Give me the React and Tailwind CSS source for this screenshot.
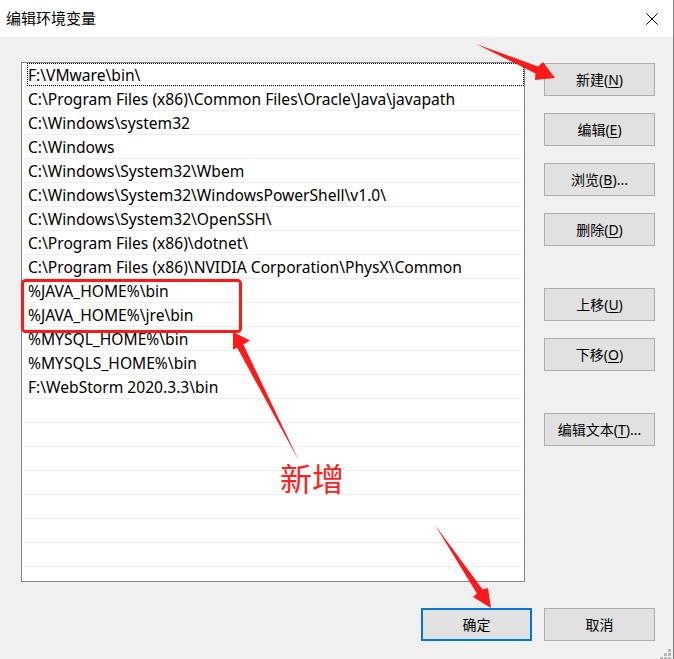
import React from "react";

const paths = [
  "F:\\VMware\\bin\\",
  "C:\\Program Files (x86)\\Common Files\\Oracle\\Java\\javapath",
  "C:\\Windows\\system32",
  "C:\\Windows",
  "C:\\Windows\\System32\\Wbem",
  "C:\\Windows\\System32\\WindowsPowerShell\\v1.0\\",
  "C:\\Windows\\System32\\OpenSSH\\",
  "C:\\Program Files (x86)\\dotnet\\",
  "C:\\Program Files (x86)\\NVIDIA Corporation\\PhysX\\Common",
  "%JAVA_HOME%\\bin",
  "%JAVA_HOME%\\jre\\bin",
  "%MYSQL_HOME%\\bin",
  "%MYSQLS_HOME%\\bin",
  "F:\\WebStorm 2020.3.3\\bin",
];

const font = { fontFamily: '"Noto Sans", "Noto Sans CJK SC", sans-serif' };

function Btn({ label, keyChar, dots, primary, className = "" }) {
  return (
    <button
      className={`h-[33px] w-[111px] flex items-center justify-center text-[14px] text-black bg-[#e1e1e1] ${
        primary ? "border-2 border-[#0078d7]" : "border border-[#adadad]"
      } ${className}`}
    >
      {label}
      {keyChar && (
        <>
          (<span className="underline underline-offset-2">{keyChar}</span>)
        </>
      )}
      {dots && "..."}
    </button>
  );
}

export default function App() {
  const rows = [...paths, ...Array(8).fill("")];
  return (
    <div
      style={font}
      className="relative w-[674px] h-[659px] bg-[#f0f0f0] border-r border-[#7f7f7f] flex flex-col overflow-hidden"
    >
      <div className="h-[37px] bg-white flex items-center justify-between pl-[6px] pr-[15px]">
        <span className="text-[15px] text-black">编辑环境变量</span>
        <svg width="12" height="12" viewBox="0 0 12 12">
          <path d="M0.5 0.5L11.5 11.5M11.5 0.5L0.5 11.5" stroke="#000" strokeWidth="1" />
        </svg>
      </div>

      <div className="flex pt-[25px] pl-[21px] gap-[19px]">
        <div className="w-[504px] h-[520px] bg-white border border-[#828790] overflow-hidden">
          {rows.map((p, i) => (
            <div
              key={i}
              className="relative h-[24px] border-b border-[#efefef] pl-[6px] pt-[2px] flex items-center text-[15.6px] text-black whitespace-nowrap"
            >
              {i === 0 && (
                <div className="absolute top-0 bottom-0 left-[5px] right-0 border border-dotted border-black" />
              )}
              {p}
            </div>
          ))}
        </div>

        <div className="flex flex-col w-[111px] pt-[1px]">
          <Btn label="新建" keyChar="N" />
          <Btn label="编辑" keyChar="E" className="mt-[17px]" />
          <Btn label="浏览" keyChar="B" dots className="mt-[17px]" />
          <Btn label="删除" keyChar="D" className="mt-[17px]" />
          <Btn label="上移" keyChar="U" className="mt-[42px]" />
          <Btn label="下移" keyChar="O" className="mt-[17px]" />
          <Btn label="编辑文本" keyChar="T" dots className="mt-[42px]" />
        </div>
      </div>

      <div className="flex justify-end gap-[12px] pr-[18px] mt-[26px]">
        <Btn label="确定" primary className="w-[110px]" />
        <Btn label="取消" />
      </div>

      {/* size grip */}
      <svg className="absolute right-[1px] bottom-0" width="14" height="12" viewBox="0 0 14 12">
        <rect x="10" y="2" width="3" height="3" fill="#b5b5b5" />
        <rect x="6" y="6" width="3" height="3" fill="#b5b5b5" />
        <rect x="10" y="6" width="3" height="3" fill="#b5b5b5" />
        <rect x="2" y="10" width="3" height="3" fill="#b5b5b5" />
        <rect x="6" y="10" width="3" height="3" fill="#b5b5b5" />
        <rect x="10" y="10" width="3" height="3" fill="#b5b5b5" />
      </svg>

      {/* red annotations */}
      <svg className="absolute inset-0 pointer-events-none" width="674" height="659" viewBox="0 0 674 659">
        <rect x="22.5" y="280.5" width="218" height="51" rx="3" fill="none" stroke="#ff1a1a" strokeWidth="3" />
        <polygon points="233,332 250,340.5 243.4,344.6 299,461 237.2,347.8 233,349.5" fill="#ff1a1a" />
        <polygon points="476,44 538,66.5 543,62 555,78 535,80 535.5,73.5" fill="#ff1a1a" />
        <polygon points="435,525 482.7,589.4 488,588 491,608 473,597 476.9,593.4" fill="#ff1a1a" />
      </svg>
      <div
        className="absolute left-[280px] top-[461px] text-[32px] leading-[32px] text-[#ff2020]"
        style={{ fontFamily: '"Noto Sans CJK SC", sans-serif' }}
      >
        新增
      </div>
    </div>
  );
}
